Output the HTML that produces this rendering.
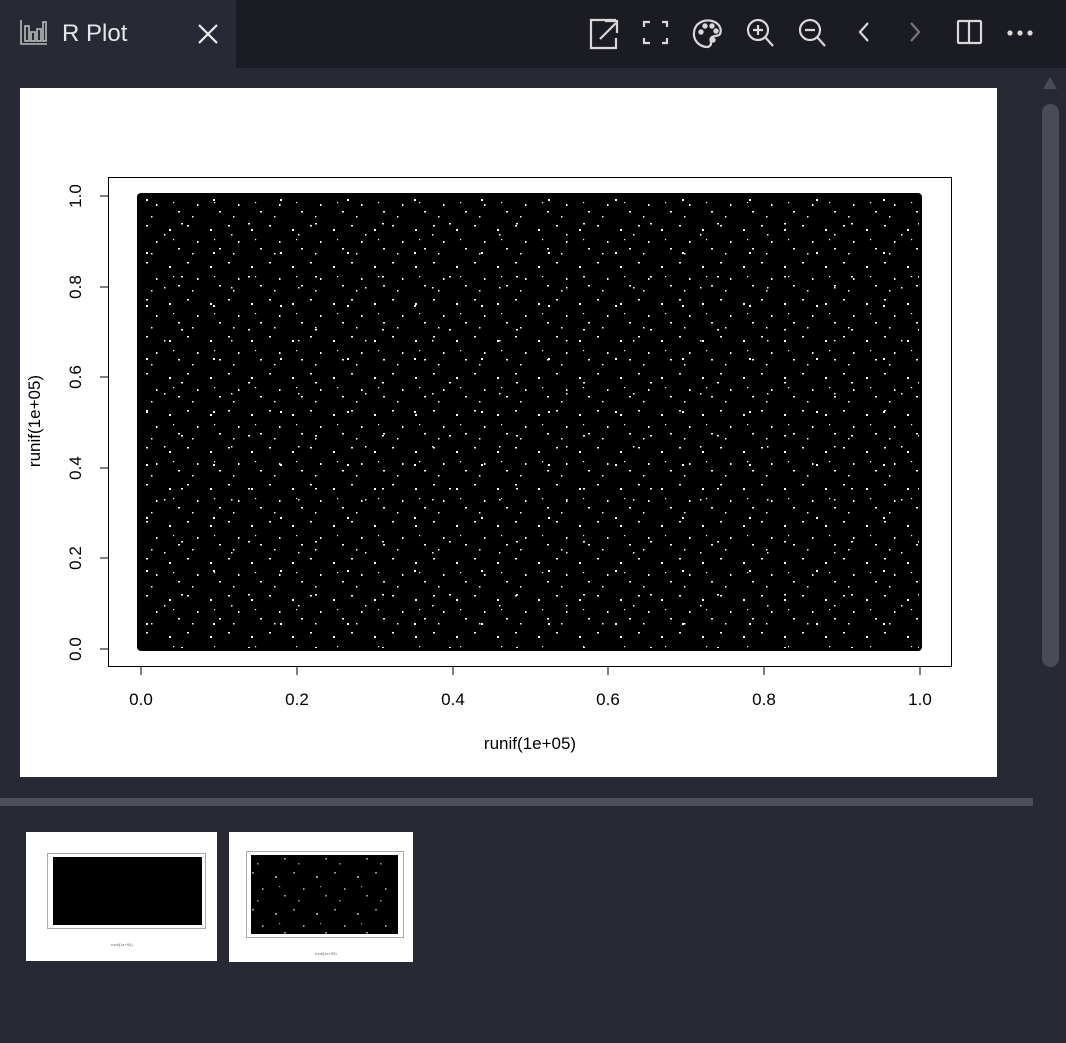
<!DOCTYPE html>
<html><head><meta charset="utf-8"><style>
html,body{margin:0;padding:0;width:1066px;height:1043px;overflow:hidden;background:#272935;font-family:"Liberation Sans",sans-serif}
.top{position:absolute;left:0;top:0;width:1066px;height:68px;background:#1b1c23}
.tab{position:absolute;left:0;top:0;width:236px;height:68px;background:#272935}
.tab .t{position:absolute;left:62px;top:20px;color:#e6e6e6;font-size:24px;font-family:"Liberation Sans",sans-serif}
svg{position:absolute}
</style></head><body>
<div class="top"></div>
<div class="tab"><span class="t">R Plot</span></div>
<svg style="left:18px;top:18px" width="32" height="30" viewBox="0 0 32 30" fill="none" stroke="#bbb" stroke-width="1.6">
<path d="M3 2V26H29"/><rect x="7" y="8" width="4" height="15"/><rect x="13" y="14" width="4" height="9"/><rect x="19" y="11" width="4" height="12"/><rect x="25" y="4" width="3" height="19"/></svg>
<svg style="left:196px;top:22px" width="24" height="24" viewBox="0 0 24 24" stroke="#eee" stroke-width="2.2"><path d="M3 3L21 21M21 3L3 21"/></svg>
<svg style="left:588px;top:16px" width="450" height="36" viewBox="0 0 450 36" fill="none" stroke="#d8d8d8" stroke-width="2.2">
<path d="M28 4H3V32H28V22M12 23L28 7M17 5H29V17"/>
<path d="M56 11V6H62M74 6H79V11M79 22V27H74M62 27H56V22"/>
<path d="M120 31C110 31 105 23 106 16C107 7 116 3 124 5C132 7 134 14 132 18C130 21 125 19 123 22C121 25 126 28 120 31Z"/>
<circle cx="113" cy="16" r="1.6" fill="#d8d8d8"/><circle cx="117" cy="10" r="1.6" fill="#d8d8d8"/><circle cx="124" cy="10" r="1.6" fill="#d8d8d8"/><circle cx="128" cy="15" r="1.6" fill="#d8d8d8"/><circle cx="125" cy="24" r="1.6" fill="#d8d8d8"/>
<circle cx="170" cy="14" r="10"/><path d="M177 21L185 30M165 14H175M170 9V19"/>
<circle cx="222" cy="14" r="10"/><path d="M229 21L237 30M217 14H227"/>
<path d="M280 7L272 16L280 25"/>
<path d="M323 7L331 16L323 25" stroke="#777"/>
<rect x="370" y="5" width="23" height="22" rx="1"/><path d="M381 5V27"/>
<circle cx="422" cy="17" r="1.5" fill="#d8d8d8"/><circle cx="432" cy="17" r="1.5" fill="#d8d8d8"/><circle cx="442" cy="17" r="1.5" fill="#d8d8d8"/>
</svg>
<svg style="left:1040px;top:74px" width="22" height="600"><path d="M3 15L10 3L17 15Z" fill="#4a4b57"/><rect x="2" y="30" width="17" height="563" rx="8.5" fill="#4a4b57"/></svg>
<svg style="left:20px;top:88px" width="977" height="689" viewBox="20 88 977 689">
<defs><pattern id="sp" width="41" height="37" patternUnits="userSpaceOnUse">
<rect x="5" y="7" width="2" height="2" fill="#fff"/><rect x="23" y="3" width="2" height="1.5" fill="#fff"/><rect x="33" y="19" width="1.5" height="2" fill="#fff"/><rect x="14" y="26" width="2" height="1.5" fill="#fff"/><rect x="28" y="31" width="1.5" height="1.5" fill="#fff"/><rect x="9" y="17" width="1.2" height="1.2" fill="#fff"/></pattern>
<pattern id="sp2" width="67" height="53" patternUnits="userSpaceOnUse"><rect x="12" y="40" width="2" height="2" fill="#fff"/><rect x="47" y="11" width="2" height="1.5" fill="#fff"/><rect x="30" y="22" width="1.5" height="1.5" fill="#fff"/></pattern></defs>
<rect x="20" y="88" width="977" height="689" fill="#fff"/>
<rect x="108.5" y="177.5" width="843" height="489" fill="none" stroke="#000" stroke-width="1"/>
<rect x="137" y="193" width="785" height="458" rx="4" fill="#000"/>
<rect x="140" y="196" width="779" height="452" fill="url(#sp)"/>
<rect x="140" y="196" width="779" height="452" fill="url(#sp2)"/>
<g stroke="#000" stroke-width="1">
<path d="M141 666.5H920M141 667V675M297 667V675M453 667V675M608 667V675M764 667V675M920 667V675"/>
<path d="M100 196H108M100 287H108M100 377H108M100 468H108M100 558H108M100 649H108"/>
</g>
<g font-size="17" fill="#000" text-anchor="middle" font-family="Liberation Sans,sans-serif">
<text x="141" y="705">0.0</text><text x="297" y="705">0.2</text><text x="453" y="705">0.4</text><text x="608" y="705">0.6</text><text x="764" y="705">0.8</text><text x="920" y="705">1.0</text>
<text x="530" y="749">runif(1e+05)</text>
<g transform="rotate(-90)">
<text x="-649" y="81">0.0</text><text x="-558" y="81">0.2</text><text x="-468" y="81">0.4</text><text x="-377" y="81">0.6</text><text x="-287" y="81">0.8</text><text x="-196" y="81">1.0</text>
<text x="-421" y="40">runif(1e+05)</text></g>
</g>
</svg>
<div style="position:absolute;left:0;top:798px;width:1033px;height:8px;background:#4e4f5b"></div>
<svg style="left:26px;top:832px" width="191" height="129"><rect width="191" height="129" fill="#fff"/><rect x="21.5" y="21.5" width="158" height="75" fill="none" stroke="#aaa"/><rect x="27" y="25" width="149" height="68" fill="#000"/><g font-size="4" fill="#666"><text x="85" y="114">runif(1e+06)</text></g></svg>
<svg style="left:229px;top:832px" width="184" height="130"><rect width="184" height="130" fill="#fff"/><rect x="17.5" y="19.5" width="157" height="86" fill="none" stroke="#aaa"/><rect x="22" y="23" width="147" height="79" fill="#000"/><rect x="22" y="23" width="147" height="79" fill="url(#sp)" opacity=".6"/><g font-size="4" fill="#666"><text x="86" y="123">runif(1e+05)</text></g></svg>
</body></html>
